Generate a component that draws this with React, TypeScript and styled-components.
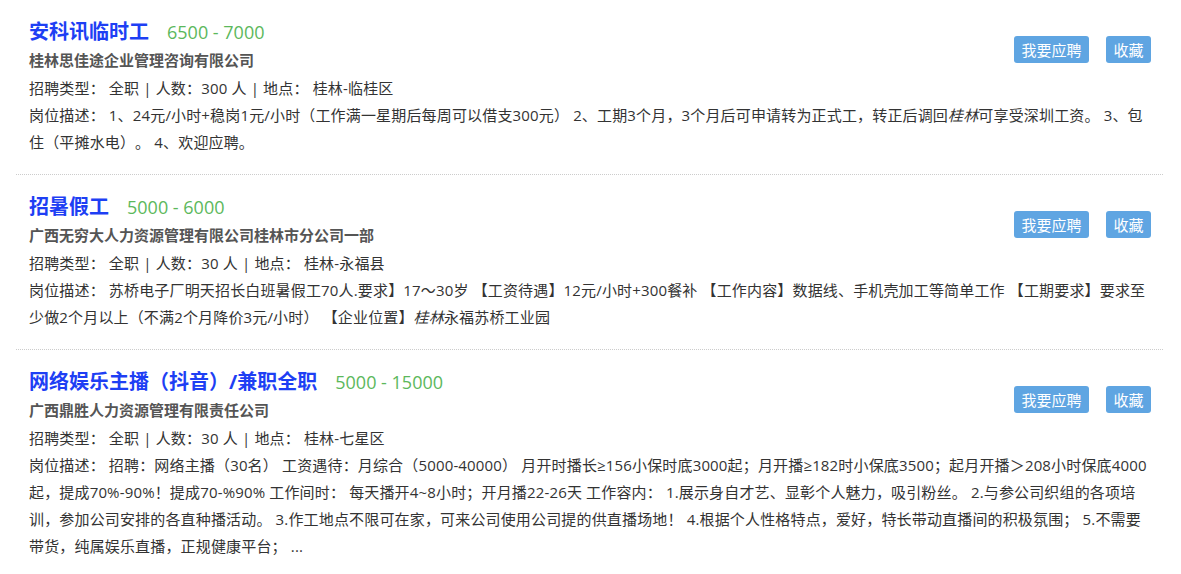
import React from "react";
import styled, { createGlobalStyle } from "styled-components";

const GlobalStyle = createGlobalStyle`
	html, body {
		margin: 0;
		padding: 0;
		background: #fff;
	}
	body {
		font-family: "Open Sans", "Noto Sans CJK SC", sans-serif;
		font-size: 15px;
		color: #333;
		text-spacing-trim: space-all;
	}
`;

const List = styled.ul`
	list-style: none;
	margin: 0 18px 0 16px;
	padding: 0;
`;

const Item = styled.li`
	padding: 17px 12px 18px 13px;
	border-bottom: 1px dotted #ccc;
	&:last-child {
		border-bottom: none;
	}
`;

const Actions = styled.div`
	float: right;
	display: flex;
	gap: 17px;
	margin-top: 19px;
`;

const Button = styled.a<{ $wide?: boolean }>`
	display: inline-flex;
	align-items: center;
	justify-content: center;
	height: 27px;
	width: ${(p) => (p.$wide ? 75 : 45)}px;
	background: #5fa5e2;
	color: #fff;
	border-radius: 3px;
	font-size: 15px;
	cursor: pointer;
	text-decoration: none;
`;

const TitleRow = styled.div`
	display: flex;
	align-items: baseline;
	gap: 18px;
	height: 30px;
	line-height: 30px;
`;

const Title = styled.a`
	color: #1e3ff4;
	font-size: 20px;
	font-weight: bold;
	text-decoration: none;
`;

const Salary = styled.span`
	color: #5cb85c;
	font-size: 18px;
`;

const Company = styled.div`
	color: #555;
	font-weight: bold;
	font-size: 15px;
	line-height: 27px;
`;

const Line = styled.p<{ $tall?: boolean }>`
	margin: 0;
	font-size: 15px;
	letter-spacing: 0.16px;
	line-height: ${(p) => (p.$tall ? 28 : 27)}px;
	color: #333;
	em {
		font-style: italic;
	}
`;

type Job = {
	title: string;
	salary: string;
	company: string;
	count: string;
	place: string;
	desc: React.ReactNode;
};

const jobs: Job[] = [
	{
		title: "安科讯临时工",
		salary: "6500 - 7000",
		company: "桂林思佳途企业管理咨询有限公司",
		count: "300",
		place: "桂林-临桂区",
		desc: (
			<>
				1、24元/小时+稳岗1元/小时（工作满一星期后每周可以借支300元） 2、工期3个月，3个月后可申请转为正式工，转正后调回<em>桂林</em>可享受深圳工资。 3、包住（平摊水电）。 4、欢迎应聘。
			</>
		),
	},
	{
		title: "招暑假工",
		salary: "5000 - 6000",
		company: "广西无穷大人力资源管理有限公司桂林市分公司一部",
		count: "30",
		place: "桂林-永福县",
		desc: (
			<>
				苏桥电子厂明天招长白班暑假工70人.要求】17～30岁 【工资待遇】12元/小时+300餐补 【工作内容】数据线、手机壳加工等简单工作 【工期要求】要求至少做2个月以上（不满2个月降价3元/小时） 【企业位置】<em>桂林</em>永福苏桥工业园
			</>
		),
	},
	{
		title: "网络娱乐主播（抖音）/兼职全职",
		salary: "5000 - 15000",
		company: "广西鼎胜人力资源管理有限责任公司",
		count: "30",
		place: "桂林-七星区",
		desc: (
			<>
				招聘：网络主播（30名） 工资遇待：月综合（5000-40000） 月开时播长≥156小保时底3000起；月开播≥182时小保底3500；起月开播＞208小时保底4000起，提成70%-90%！提成70-%90% 工作间时： 每天播开4~8小时；开月播22-26天 工作容内： 1.展示身自才艺、显彰个人魅力，吸引粉丝。 2.与参公司织组的各项培训，参加公司安排的各直种播活动。 3.作工地点不限可在家，可来公司使用公司提的供直播场地！ 4.根据个人性格特点，爱好，特长带动直播间的积极氛围； 5.不需要带货，纯属娱乐直播，正规健康平台； ...
			</>
		),
	},
];

export default function App() {
	return (
		<>
			<GlobalStyle />
			<List>
				{jobs.map((job) => (
					<Item key={job.title}>
						<Actions>
							<Button $wide>我要应聘</Button>
							<Button>收藏</Button>
						</Actions>
						<TitleRow>
							<Title>{job.title}</Title>
							<Salary>{job.salary}</Salary>
						</TitleRow>
						<Company>{job.company}</Company>
						<Line $tall>
							招聘类型： 全职 | 人数：{job.count} 人 | 地点： {job.place}
						</Line>
						<Line>岗位描述： {job.desc}</Line>
					</Item>
				))}
			</List>
		</>
	);
}
